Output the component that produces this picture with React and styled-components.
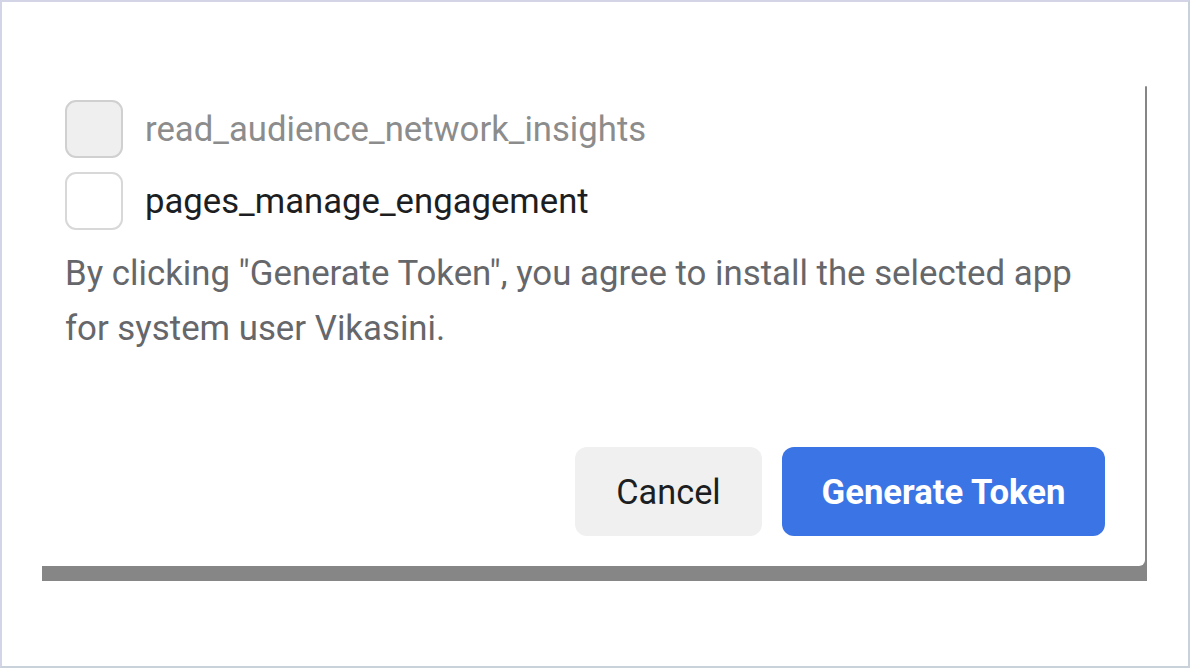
import React from 'react';
import styled, { createGlobalStyle } from 'styled-components';

const GlobalStyle = createGlobalStyle`
  html, body {
    margin: 0;
    padding: 0;
    background: #fff;
  }
  body {
    font-family: Roboto, 'Liberation Sans', sans-serif;
  }
`;

const permissions = [
  { name: 'read_audience_network_insights', disabled: true },
  { name: 'pages_manage_engagement', disabled: false },
];

const App = () => {
  return (
    <>
      <GlobalStyle />
      <Page>
        <Dialog>
          <PermissionList>
            {permissions.map((p) => (
              <PermissionRow key={p.name}>
                <Checkbox $disabled={p.disabled} />
                <PermissionName $disabled={p.disabled}>{p.name}</PermissionName>
              </PermissionRow>
            ))}
          </PermissionList>
          <Notice>
            By clicking "Generate Token", you agree to install the selected app
            <br />
            for system user Vikasini.
          </Notice>
          <Actions>
            <Button $width={187}>Cancel</Button>
            <Button $primary $width={323}>
              Generate Token
            </Button>
          </Actions>
        </Dialog>
      </Page>
    </>
  );
};

const Page = styled.div`
  position: relative;
  z-index: 0;
  box-sizing: border-box;
  width: 1190px;
  height: 668px;
  overflow: hidden;
  background: #fff;
  border: 2px solid #d3d4e6;
  border-right-color: #c9d1da;
  border-bottom-color: #c9d1da;
`;

const Dialog = styled.div`
  position: relative;
  box-sizing: border-box;
  display: flex;
  flex-direction: column;
  width: 1143px;
  height: 564px;
  padding: 98px 40px 30px 63px;
  background: #fff;
  border-bottom-right-radius: 6px;

  /* modal backdrop peeking out behind the dialog edge */
  &::before {
    content: '';
    position: absolute;
    left: 40px;
    top: 84px;
    right: -2px;
    bottom: -15px;
    background: #868686;
    border-top: 1px solid #a9a9a9;
    z-index: -1;
  }
`;

const PermissionList = styled.div`
  display: flex;
  flex-direction: column;
  gap: 14px;
`;

const PermissionRow = styled.label`
  display: flex;
  align-items: center;
  gap: 22px;
`;

const Checkbox = styled.span`
  box-sizing: border-box;
  width: 58px;
  height: 58px;
  border-radius: 11px;
  border: 2px solid ${(p) => (p.$disabled ? '#d0d0d0' : '#d8d8d8')};
  background: ${(p) => (p.$disabled ? '#efefef' : '#fff')};
`;

const PermissionName = styled.span`
  font-size: 34.7px;
  color: ${(p) => (p.$disabled ? '#8c8c8c' : '#1c1e21')};
`;

const Notice = styled.p`
  margin: 16px 0 0;
  font-size: 34.8px;
  line-height: 55px;
  color: #65676b;
`;

const Actions = styled.div`
  display: flex;
  justify-content: flex-end;
  gap: 20px;
  margin-top: auto;
`;

const Button = styled.button`
  width: ${(p) => p.$width}px;
  height: 89px;
  border: none;
  border-radius: 12px;
  font-family: Roboto, 'Liberation Sans', sans-serif;
  font-size: ${(p) => (p.$primary ? 34.7 : 34.3)}px;
  font-weight: ${(p) => (p.$primary ? 700 : 400)};
  color: ${(p) => (p.$primary ? '#fff' : '#1c1e21')};
  background: ${(p) => (p.$primary ? '#3b74e4' : '#f0f0f0')};
  cursor: pointer;
`;

export default App;
